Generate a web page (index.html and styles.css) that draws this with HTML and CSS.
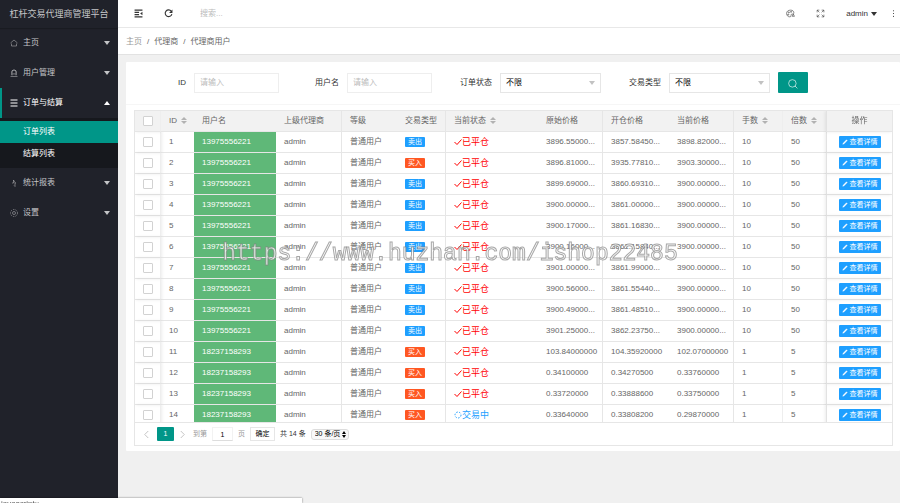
FILE: index.html
```html
<!DOCTYPE html>
<html lang="zh-CN">
<head>
  <meta charset="UTF-8">
  <meta name="viewport" content="width=device-width, initial-scale=1.0">
  <title>杠杆交易代理商管理平台</title>
  <link rel="stylesheet" href="styles.css">
</head>
<body>
  <aside class="side">
    <div class="logo">杠杆交易代理商管理平台</div>
    <nav>
      <a class="nav-item" href="#">
        <svg class="nav-icon" viewBox="0 0 16 16"><path d="M1 8l7-6 7 6M3 9v5h10V9" /></svg>
        <span>主页</span><i class="caret"></i>
      </a>
      <a class="nav-item" href="#">
        <svg class="nav-icon" viewBox="0 0 16 16"><circle cx="8" cy="6" r="4" /><path d="M1 15h14M3 12V7a5 5 0 0 1 10 0v5M6 10l-2 3M10 10l2 3" /></svg>
        <span>用户管理</span><i class="caret"></i>
      </a>
      <a class="nav-item open" href="#">
        <svg class="nav-icon" viewBox="0 0 16 16"><path d="M1 2h14M1 8h14M1 14h14" /></svg>
        <span>订单与结算</span><i class="caret up"></i>
      </a>
      <div class="sub-nav">
        <a class="active" href="#">订单列表</a>
        <a href="#">结算列表</a>
      </div>
      <a class="nav-item" href="#">
        <svg class="nav-icon" viewBox="0 0 16 16"><path d="M4 8h3V2l3 5v8l-2-2M10 8h2" /></svg>
        <span>统计报表</span><i class="caret"></i>
      </a>
      <a class="nav-item" href="#">
        <svg class="nav-icon" viewBox="0 0 16 16"><circle cx="8" cy="8" r="7" stroke-dasharray="3 2" /><circle cx="8" cy="8" r="3" /></svg>
        <span>设置</span><i class="caret"></i>
      </a>
    </nav>
  </aside>

  <div class="main">
    <header class="header">
      <button class="icon-btn" aria-label="侧边伸缩">
        <svg viewBox="0 0 16 16"><path d="M1 2h14M1 6h8M1 10h8M1 14h14" /><path class="solid" d="M11 8l4-3v6z" /></svg>
      </button>
      <button class="icon-btn" aria-label="刷新">
        <svg viewBox="0 0 16 16"><path d="M13 4A6 6 0 1 0 14 9" /><path class="solid" d="M15 1v6H9z" /></svg>
      </button>
      <input class="search" type="text" placeholder="搜索..." aria-label="搜索">
      <div class="header-right">
        <button class="icon-btn thin" aria-label="主题">
          <svg viewBox="0 0 16 16"><path d="M7 14C3 14 1 11 1 8c0-4 3-6 7-6 4 0 6 2 6 5 0 2-2 2-4 2-2 1 0 5-3 5z" /><circle cx="5" cy="6" r="1" /><circle cx="9" cy="5" r="1" /><circle cx="4" cy="10" r="1" /><path d="M11 13l2-4 2 4z" /></svg>
        </button>
        <button class="icon-btn thin" aria-label="全屏">
          <svg viewBox="0 0 16 16"><path d="M2 6V2h4M2 2l4 4M10 2h4v4M14 2l-4 4M14 10v4h-4M14 14l-4-4M6 14H2v-4M2 14l4-4" /></svg>
        </button>
        <a class="user" href="#">admin <i class="caret"></i></a>
        <button class="icon-btn more" aria-label="更多">
          <svg viewBox="0 0 16 16"><circle class="solid" cx="8" cy="3" r="1" /><circle class="solid" cx="8" cy="8" r="1" /><circle class="solid" cx="8" cy="13" r="1" /></svg>
        </button>
      </div>
    </header>

    <div class="breadcrumb">
      <a href="#">主页</a><span>/</span><b>代理商</b><span>/</span><b>代理商用户</b>
    </div>

    <section class="card">
      <form class="filters">
        <div class="field">
          <label for="orderId">ID</label>
          <input id="orderId" type="text" placeholder="请输入">
        </div>
        <div class="field">
          <label for="userName">用户名</label>
          <input id="userName" type="text" placeholder="请输入">
        </div>
        <div class="field">
          <label for="status">订单状态</label>
          <div class="select-box">
            <select id="status"><option>不限</option><option>交易中</option><option>已平仓</option></select>
            <i class="caret"></i>
          </div>
        </div>
        <div class="field">
          <label for="type">交易类型</label>
          <div class="select-box">
            <select id="type"><option>不限</option><option>买入</option><option>卖出</option></select>
            <i class="caret"></i>
          </div>
        </div>
        <button class="search-btn" type="button" aria-label="查询">
          <svg viewBox="0 0 16 16"><circle cx="7" cy="7" r="6" /><path d="M11 11l4 4" /></svg>
        </button>
      </form>

      <div class="table-box">
        <div class="table-scroll">
          <table>
            <colgroup>
              <col class="w-check"><col class="w-id"><col class="w-user"><col class="w-open"><col class="w-level"><col class="w-type"><col class="w-status">
              <col class="w-price"><col class="w-open"><col class="w-price"><col class="w-type"><col class="w-times"><col class="w-open">
            </colgroup>
            <thead>
              <tr>
                <th class="fixed-left"><input type="checkbox" aria-label="全选"></th>
                <th>ID <i class="sort"></i></th>
                <th>用户名</th>
                <th class="line">上级代理商</th>
                <th>等级</th>
                <th class="line">交易类型</th>
                <th>当前状态 <i class="sort"></i></th>
                <th class="line">原始价格</th>
                <th>开仓价格</th>
                <th class="line">当前价格</th>
                <th class="line faint">手数 <i class="sort"></i></th>
                <th>倍数 <i class="sort"></i></th>
                <th class="fixed-right">操作</th>
              </tr>
            </thead>
            <tbody id="rows"></tbody>
          </table>
        </div>
        <div class="pager">
          <button class="arrow" aria-label="上一页"><svg viewBox="0 0 8 8"><path d="M6 0L2 4l4 4" /></svg></button>
          <span class="current">1</span>
          <button class="arrow" aria-label="下一页"><svg viewBox="0 0 8 8"><path d="M2 0l4 4-4 4" /></svg></button>
          <label class="muted" for="page">到第</label>
          <input id="page" type="text" value="1">
          <span class="muted">页</span>
          <button class="go">确定</button>
          <span>共 14 条</span>
          <div class="limit">
            <select aria-label="每页条数"><option>30 条/页</option></select>
            <i class="sort dark"></i>
          </div>
        </div>
      </div>
    </section>
  </div>

  <div class="watermark">https://www.huzhan.com/ishop22485</div>
  <div class="link-status">javascript:;</div>

  <script>
    const orders = [
      ["13975556221", "sell", "3896.55000...", "3857.58450...", "3898.82000...", 10, 50],
      ["13975556221", "buy", "3896.81000...", "3935.77810...", "3903.30000...", 10, 50],
      ["13975556221", "sell", "3899.69000...", "3860.69310...", "3900.00000...", 10, 50],
      ["13975556221", "sell", "3900.00000...", "3861.00000...", "3900.00000...", 10, 50],
      ["13975556221", "sell", "3900.17000...", "3861.16830...", "3900.00000...", 10, 50],
      ["13975556221", "sell", "3900.16000...", "3861.15840...", "3900.00000...", 10, 50],
      ["13975556221", "sell", "3901.00000...", "3861.99000...", "3900.00000...", 10, 50],
      ["13975556221", "sell", "3900.56000...", "3861.55440...", "3900.00000...", 10, 50],
      ["13975556221", "sell", "3900.49000...", "3861.48510...", "3900.00000...", 10, 50],
      ["13975556221", "sell", "3901.25000...", "3862.23750...", "3900.00000...", 10, 50],
      ["18237158293", "buy", "103.84000000", "104.35920000", "102.07000000", 1, 5],
      ["18237158293", "buy", "0.34100000", "0.34270500", "0.33760000", 1, 5],
      ["18237158293", "buy", "0.33720000", "0.33888600", "0.33750000", 1, 5],
      ["18237158293", "buy", "0.33640000", "0.33808200", "0.29870000", 1, 5]
    ];

    const closed = '<span class="status closed"><svg viewBox="0 0 16 16"><path d="M1 8l5 5L15 3" /></svg>已平仓</span>';
    const trading = '<span class="status trading"><svg viewBox="0 0 16 16"><circle cx="8" cy="8" r="6" stroke-dasharray="3 3" /></svg>交易中</span>';

    document.getElementById("rows").innerHTML = orders.map((o, i) => `
      <tr>
        <td class="fixed-left"><input type="checkbox" aria-label="选择 ${i + 1}"></td>
        <td>${i + 1}</td>
        <td class="phone">${o[0]}</td>
        <td class="line">admin</td>
        <td>普通用户</td>
        <td class="line"><span class="tag ${o[1]}">${o[1] === "sell" ? "卖出" : "买入"}</span></td>
        <td>${i === 13 ? trading : closed}</td>
        <td class="line">${o[2]}</td>
        <td>${o[3]}</td>
        <td class="line">${o[4]}</td>
        <td class="line faint">${o[5]}</td>
        <td>${o[6]}</td>
        <td class="fixed-right"><button class="detail"><svg viewBox="0 0 16 16"><path d="M2 14l1-3 9-9 2 2-9 9z" /></svg>查看详情</button></td>
      </tr>`).join("");
  </script>
</body>
</html>
```

FILE: styles.css
```css
* {
  box-sizing: border-box;
}

body {
  margin: 0;
  display: flex;
  min-height: 100vh;
  background: #f0f0f0;
  color: #666;
  font-family: "Liberation Sans", "Noto Sans CJK SC", sans-serif;
  font-size: 8px;
  line-height: 12px;
  overflow: hidden;
}

a {
  color: inherit;
  text-decoration: none;
}

button,
input,
select {
  font: inherit;
  color: inherit;
  margin: 0;
  padding: 0;
  border: 0;
  border-radius: 0;
  background: none;
  outline: none;
}

select {
  appearance: none;
}

svg {
  display: block;
  fill: none;
  stroke: currentColor;
}

.solid {
  fill: currentColor;
  stroke: none;
}

.caret {
  border: 3px solid transparent;
  border-top: 4px solid currentColor;
  border-bottom: 0;
}

.caret.up {
  border-top: 0;
  border-bottom: 4px solid currentColor;
}

/* sidebar */
.side {
  flex: none;
  width: 118px;
  background: #20222a;
  color: #c4c5c7;
}

.logo {
  height: 28px;
  line-height: 28px;
  font-size: 9px;
  text-align: center;
  white-space: nowrap;
  box-shadow: 0 1px 1px rgba(0, 0, 0, 0.2);
}

.nav-item {
  display: flex;
  align-items: center;
  height: 30px;
  padding: 0 8px 0 10px;
}

.nav-item .caret {
  margin-left: auto;
}

.nav-item.open {
  color: #fff;
  padding-left: 8px;
  border-left: 2px solid #009688;
}

.nav-icon {
  width: 8px;
  height: 8px;
  margin-right: 5px;
}

.nav-item.open .nav-icon {
  stroke-width: 2;
}

.sub-nav {
  padding: 3px 0;
  background: #16181d;
  color: #fff;
}

.sub-nav a {
  display: block;
  padding-left: 23px;
  line-height: 22px;
}

.sub-nav .active {
  background: #009688;
}

/* top bar */
.main {
  flex: 1;
  min-width: 0;
}

.header {
  display: flex;
  align-items: center;
  gap: 21px;
  height: 28px;
  padding: 0 2px 0 16px;
  background: #fff;
  color: #333;
  border-bottom: 1px solid #e8e8e8;
}

.icon-btn svg {
  width: 9px;
  height: 9px;
  stroke-width: 2;
}

.icon-btn.thin svg {
  stroke-width: 1;
}

.search {
  width: 90px;
  margin-left: 6px;
}

::placeholder {
  color: #bbb;
  opacity: 1;
}

.header-right {
  display: flex;
  align-items: center;
  gap: 21px;
  margin-left: auto;
}

.user {
  display: flex;
  align-items: center;
  gap: 3px;
}

.more {
  margin-left: -9px;
}

.breadcrumb {
  display: flex;
  gap: 5px;
  height: 27px;
  padding: 0 8px;
  line-height: 27px;
  background: #fff;
  border-bottom: 1px solid #e2e2e2;
}

.breadcrumb a {
  color: #999;
}

.breadcrumb b {
  font-weight: normal;
}

/* filters */
.card {
  margin: 7px 0 0 8px;
  padding-bottom: 5px;
  background: #fff;
  border-radius: 1px;
}

.filters {
  display: flex;
  gap: 5px;
  padding: 10px 5px 11px;
  color: #333;
  border-bottom: 1px solid #f6f6f6;
}

.field {
  display: flex;
  align-items: center;
}

.field label {
  width: 63px;
  padding-right: 8px;
  text-align: right;
}

.field input {
  width: 85px;
  height: 20px;
  padding: 0 5px;
  border: 1px solid #eee;
}

.select-box {
  display: flex;
  align-items: center;
  width: 101px;
  height: 20px;
  padding-right: 5px;
  border: 1px solid #e6e6e6;
  color: #000;
}

.select-box select {
  flex: 1;
  padding-left: 5px;
}

.select-box .caret {
  color: #c2c2c2;
}

.search-btn {
  width: 30px;
  height: 21px;
  margin-left: 3px;
  background: #009688;
  color: #fff;
  border-radius: 1px;
}

.search-btn svg {
  width: 10px;
  height: 10px;
  margin: 2px auto 0;
}

/* order table */
.table-box {
  margin: 5px 7px 0 8px;
  border: 1px solid #e6e6e6;
}

.table-scroll {
  height: 311px;
  overflow: auto;
  scrollbar-width: none;
}

table {
  width: 100%;
  table-layout: fixed;
  border-collapse: separate;
  border-spacing: 0;
}

.w-check { width: 26px; }
.w-id { width: 33px; }
.w-user { width: 82px; }
.w-price { width: 65px; }
.w-level { width: 55px; }
.w-type { width: 49px; }
.w-status { width: 92px; }
.w-open { width: 66px; }
.w-times { width: 43px; }

th,
td {
  height: 21px;
  padding: 0 0 0 8px;
  text-align: left;
  font-weight: normal;
  white-space: nowrap;
  border-bottom: 1px solid #e6e6e6;
}

th {
  position: sticky;
  top: 0;
  background: #f2f2f2;
}

.line {
  border-right: 1px solid #e6e6e6;
}

.line.faint {
  border-right-color: #eee;
}

.fixed-left {
  border-right: 1px solid #eee;
  box-shadow: 1px 0 3px rgba(0, 0, 0, 0.08);
}

.fixed-right {
  padding: 0;
  text-align: center;
  border-left: 1px solid #e2e2e2;
  box-shadow: -1px 0 3px rgba(0, 0, 0, 0.08);
}

input[type="checkbox"] {
  display: block;
  appearance: none;
  width: 10px;
  height: 10px;
  background: #fff;
  border: 1px solid #d2d2d2;
  border-radius: 1px;
}

.sort {
  display: inline-flex;
  flex-direction: column;
  gap: 1px;
  margin-left: 2px;
  vertical-align: middle;
  color: #b2b2b2;
}

.sort::before,
.sort::after {
  content: "";
  border: 3px solid transparent;
}

.sort::before {
  border-top: 0;
  border-bottom-color: currentColor;
}

.sort::after {
  border-bottom: 0;
  border-top-color: currentColor;
}

.phone {
  background: #5fb878;
  color: #fff;
}

.tag {
  display: block;
  width: 20px;
  height: 10px;
  line-height: 10px;
  font-size: 7px;
  text-align: center;
  color: #fff;
  border-radius: 1px;
}

.tag.sell {
  background: #1e9fff;
}

.tag.buy {
  background: #ff5722;
}

.status {
  display: flex;
  align-items: center;
  font-size: 9px;
}

.status svg {
  width: 8px;
  height: 8px;
  stroke-width: 2;
}

.closed {
  color: #f00;
}

.trading {
  color: #1e9fff;
}

.detail {
  display: inline-flex;
  align-items: center;
  gap: 2px;
  height: 12px;
  padding: 0 3px;
  font-size: 7px;
  color: #fff;
  background: #1e9fff;
  border-radius: 1px;
  vertical-align: middle;
}

.detail svg {
  width: 6px;
  height: 6px;
  fill: currentColor;
}

/* pagination */
.pager {
  display: flex;
  align-items: center;
  gap: 5px;
  height: 23px;
  padding: 0 8px;
  font-size: 7px;
  color: #333;
  border-top: 1px solid #e6e6e6;
}

.arrow {
  width: 9px;
  color: #bbb;
}

.arrow svg {
  width: 7px;
  height: 7px;
}

.current {
  width: 17px;
  line-height: 14px;
  text-align: center;
  color: #fff;
  background: #009688;
  border-radius: 1px;
}

.muted {
  color: #999;
}

.pager input {
  width: 21px;
  height: 14px;
  text-align: center;
  color: #000;
  border: 1px solid #f2f2f2;
  border-bottom-color: #ddd;
}

.go {
  width: 25px;
  height: 14px;
  color: #000;
  border: 1px solid #e6e6e6;
}

.limit {
  display: flex;
  align-items: center;
  height: 11px;
  padding: 0 2px 0 3px;
  color: #000;
  background: #f8f8f8;
  border: 1px solid #ddd;
  border-radius: 3px;
}

.sort.dark {
  margin-left: 1px;
  color: #000;
}

.sort.dark::before,
.sort.dark::after {
  border-left-width: 2px;
  border-right-width: 2px;
}

/* overlays */
.watermark {
  position: fixed;
  inset: 0;
  display: flex;
  align-items: center;
  justify-content: center;
  padding-top: 5px;
  font-family: "Liberation Mono", monospace;
  font-size: 23px;
  color: rgba(255, 255, 255, 0.8);
  -webkit-text-stroke: 1px rgba(130, 130, 130, 0.7);
  pointer-events: none;
}

.link-status {
  position: fixed;
  left: 0;
  bottom: 0;
  width: 302px;
  height: 5px;
  padding: 0 0 0 1px;
  overflow: hidden;
  background: #fff;
  color: #555;
  box-shadow: 0 0 2px rgba(0, 0, 0, 0.6);
}
```
